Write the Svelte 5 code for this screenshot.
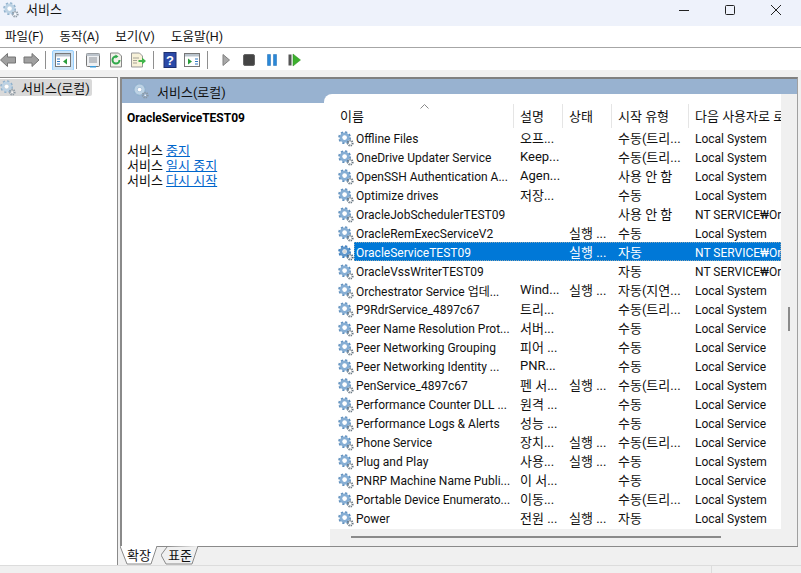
<script>
const S = "Local System";
const L = "Local Service";
const NT = "NT SERVICE₩OracleServiceTEST09";
const RUN = "실행 ...";
const TRIG = "수동(트리...";

const services = [
	["Offline Files", "오프...", "", TRIG, S],
	["OneDrive Updater Service", "Keep...", "", TRIG, S],
	["OpenSSH Authentication A...", "Agen...", "", "사용 안 함", S],
	["Optimize drives", "저장...", "", "수동", S],
	["OracleJobSchedulerTEST09", "", "", "사용 안 함", NT],
	["OracleRemExecServiceV2", "", RUN, "수동", S],
	["OracleServiceTEST09", "", RUN, "자동", NT],
	["OracleVssWriterTEST09", "", "", "자동", NT],
	["Orchestrator Service 업데...", "Wind...", RUN, "자동(지연...", S],
	["P9RdrService_4897c67", "트리...", "", TRIG, S],
	["Peer Name Resolution Prot...", "서버...", "", "수동", L],
	["Peer Networking Grouping", "피어 ...", "", "수동", L],
	["Peer Networking Identity ...", "PNR...", "", "수동", L],
	["PenService_4897c67", "펜 서...", RUN, TRIG, S],
	["Performance Counter DLL ...", "원격 ...", "", "수동", L],
	["Performance Logs & Alerts", "성능 ...", "", "수동", L],
	["Phone Service", "장치...", RUN, TRIG, L],
	["Plug and Play", "사용...", RUN, "수동", S],
	["PNRP Machine Name Publi...", "이 서...", "", "수동", L],
	["Portable Device Enumerato...", "이동...", "", TRIG, S],
	["Power", "전원 ...", RUN, "자동", S],
];

const selected = "OracleServiceTEST09";
const menus = ["파일(F)", "동작(A)", "보기(V)", "도움말(H)"];
const columns = ["이름", "설명", "상태", "시작 유형", "다음 사용자로 로그온"];
</script>

{#snippet gear(pale)}
	<svg class="gear" viewBox="0 0 16 16" width="16" height="16">
		<circle cx="6.6" cy="6.6" r="5" fill="none" stroke={pale ? "#8fb0cc" : "#5f8fbd"} stroke-width="2.8" stroke-dasharray="2 1.9" />
		<circle cx="6.6" cy="6.6" r="3.7" fill="none" stroke={pale ? "#bcd2e4" : "#86aed4"} stroke-width="2.8" />
		<circle cx="6.6" cy="6.6" r="1.9" fill="#fff" />
		<circle cx="12.2" cy="12.2" r="2.4" fill="none" stroke={pale ? "#8a96a0" : "#66747f"} stroke-width="2" stroke-dasharray="1.1 0.8" />
		<circle cx="12.2" cy="12.2" r="0.8" fill="#fff" />
	</svg>
{/snippet}

<div class="window">
	<header class="titlebar">
		{@render gear(true)}
		<span class="title">서비스</span>
		<div class="controls">
			<svg viewBox="0 0 12 12" width="12" height="12"><path d="M1 6.5h10" stroke="#222" fill="none" /></svg>
			<svg viewBox="0 0 12 12" width="12" height="12"><rect x="1.5" y="1.5" width="9" height="9" rx="1" stroke="#222" fill="none" /></svg>
			<svg viewBox="0 0 12 12" width="12" height="12"><path d="M1 1l10 10M11 1L1 11" stroke="#222" fill="none" /></svg>
		</div>
	</header>

	<nav class="menubar">
		{#each menus as m}
			<span>{m}</span>
		{/each}
	</nav>

	<div class="toolbar">
		<svg class="tool" viewBox="0 0 40 16" width="40" height="16">
			<path d="M0.500 8L7.500 1.500V5H15.500V11H7.500V14.500z" fill="#a0a0a0" stroke="#757575" />
			<path d="M39 8L32 1.500V5H24V11H32V14.500z" fill="#a0a0a0" stroke="#757575" />
		</svg>
		<i class="sep first"></i>
		<div class="tool active">
			<svg viewBox="0 0 16 16" width="16" height="16">
				<rect x="0.500" y="1.500" width="15" height="13" fill="#fff" stroke="#777" />
				<path d="M1 2h14v2.500H1z" fill="#b9c3cc" />
				<path d="M2 6.500h3v1H2zM2 9h3v1H2zM2 11.500h3v1H2z" fill="#2f78c4" />
				<path d="M12 6.500v6L8 9.500z" fill="#2a9d3a" />
			</svg>
		</div>
		<i class="sep"></i>
		<div class="tool">
			<svg viewBox="0 0 16 16" width="16" height="16">
				<rect x="1.500" y="1.500" width="13" height="13" rx="1" fill="#eef0f2" stroke="#777" />
				<path d="M1.500 1.500h13v2.500h-13z" fill="#bcc4cc" />
				<path d="M4 6h8M4 8h8M4 10h8" stroke="#8a8f96" />
				<path d="M5 14h6v1.500H5z" fill="#3a9ad9" />
			</svg>
		</div>
		<div class="tool next">
			<svg viewBox="0 0 16 16" width="16" height="16">
				<path d="M2.500 1h8l3 3v11h-11z" fill="#f2f2ea" stroke="#888" />
				<path d="M11.500 8A3.500 3.500 0 1 1 8 4.500" fill="none" stroke="#2fa84a" stroke-width="2" />
				<path d="M7.500 2.500l3 2-3 2z" fill="#2fa84a" />
			</svg>
		</div>
		<div class="tool">
			<svg viewBox="0 0 16 16" width="16" height="16">
				<path d="M1.500 1h8l3 3v11h-11z" fill="#f7f1d8" stroke="#999" />
				<path d="M3.500 6h5M3.500 8.500h4M3.500 11h4" stroke="#555" stroke-dasharray="1 1" />
				<path d="M8.500 8h3.500V5.500l4 3.500-4 3.500V10H8.500z" fill="#3fb54a" />
			</svg>
		</div>
		<i class="sep"></i>
		<div class="tool">
			<svg viewBox="0 0 16 16" width="16" height="16">
				<rect x="2" y="0.500" width="12" height="15" fill="#2b4aa8" stroke="#1d2f70" />
				<text x="8" y="13" text-anchor="middle" class="help">?</text>
			</svg>
		</div>
		<div class="tool">
			<svg viewBox="0 0 16 16" width="16" height="16">
				<rect x="0.500" y="1.500" width="15" height="13" fill="#fff" stroke="#777" />
				<path d="M1 2h14v2.500H1z" fill="#b9c3cc" />
				<path d="M4 6.500v6l4-3z" fill="#2a9d3a" />
				<path d="M11 6.500h3v1h-3zM11 9h3v1h-3zM11 11.500h3v1h-3z" fill="#2f78c4" />
			</svg>
		</div>
		<i class="sep"></i>
		<svg class="tool play" viewBox="0 0 16 16" width="16" height="16"><path d="M5 2.500l6.500 5.500-6.500 5.500z" fill="#a8a8a8" stroke="#808080" /></svg>
		<svg class="tool play" viewBox="0 0 16 16" width="16" height="16"><rect x="2.500" y="2.500" width="11" height="11" rx="1.500" fill="#444" stroke="#666" /></svg>
		<svg class="tool play" viewBox="0 0 16 16" width="16" height="16"><path d="M3.500 2.500h3v11h-3zM9.500 2.500h3v11h-3z" fill="#2a88d8" stroke="#1a68b0" stroke-width="0.500" /></svg>
		<svg class="tool play" viewBox="0 0 16 16" width="16" height="16">
			<rect x="1.500" y="2.500" width="3" height="11" fill="#555" />
			<path d="M6 2l7.500 6-7.500 6z" fill="#3db02e" stroke="#2a8a20" stroke-width="0.500" />
		</svg>
	</div>

	<main class="workspace">
		<aside class="tree">
			<div class="tree-node">
				{@render gear(true)}
				<span>서비스(로컬)</span>
			</div>
		</aside>

		<section class="panel">
			<div class="panel-body">
				<div class="panel-head">
					{@render gear(true)}
					<span>서비스(로컬)</span>
				</div>

				<div class="content">
					<div class="details">
						<h2>OracleServiceTEST09</h2>
						<p>서비스 <a href="#stop">중지</a></p>
						<p>서비스 <a href="#pause">일시 중지</a></p>
						<p>서비스 <a href="#restart">다시 시작</a></p>
					</div>

					<div class="list">
						<div class="list-main">
							<div class="viewport">
								<div class="row head">
									{#each columns as c, i}
										<div class="cell">{c}{#if i === 0}<svg class="sort" viewBox="0 0 9 5" width="9" height="5"><path d="M0.500 4.500l4-4 4 4" fill="none" stroke="#888" /></svg>{/if}</div>
									{/each}
								</div>
								{#each services as s}
									<div class="row" class:selected={s[0] === selected}>
										<div class="cell name">
											{@render gear(false)}
											<span>{s[0]}</span>
										</div>
										<div class="cell">{s[1]}</div>
										<div class="cell">{s[2]}</div>
										<div class="cell">{s[3]}</div>
										<div class="cell latin">{s[4]}</div>
									</div>
								{/each}
							</div>
							<div class="vscroll"><i></i></div>
						</div>
						<div class="hscroll"><i></i></div>
					</div>
				</div>
			</div>
			<div class="tabs">
				<div class="tab on">
					<svg viewBox="0 0 38 19" width="38" height="19"><path d="M0 0l7 18h24l6-18" fill="#fff" stroke="#8a8a8a" /></svg>
					<span>확장</span>
				</div>
				<div class="tab">
					<svg viewBox="0 0 38 19" width="38" height="19"><path d="M6 1L0 9l5 9h26l6-18" fill="#f0f0f0" stroke="#8a8a8a" /></svg>
					<span>표준</span>
				</div>
			</div>
		</section>
	</main>

	<footer class="status"><i></i></footer>
</div>

<style>
	:global(body) { margin: 0; background: #fff; }
	.window {
		width: 801px; height: 573px; display: flex; flex-direction: column; overflow: hidden;
		font-family: Roboto, "Noto Sans CJK KR", sans-serif; font-size: 13px; color: #111;
	}

	.titlebar { height: 26px; box-sizing: border-box; flex: none; background: #eef2fb; display: flex; align-items: flex-start; padding: 2px 0 0 3px; }
	.title { margin: 1px 0 0 7px; line-height: 14px; }
	.controls { margin-left: auto; display: flex; gap: 34px; padding: 2px 19px 0 0; }

	.menubar { height: 22px; box-sizing: border-box; flex: none; display: flex; align-items: center; padding: 0 0 2px 5px; gap: 16px; border-bottom: 1px solid #a6a6a6; font-size: 12.500px; }

	.toolbar { height: 22px; box-sizing: border-box; padding-top: 2px; flex: none; display: flex; align-items: center; }
	.tool { flex: none; }
	.toolbar div.tool { width: 22px; height: 21px; display: flex; align-items: center; justify-content: center; }
	.toolbar div.active { background: #cce4f7; border: 1px solid #99d1ff; box-sizing: border-box; border-radius: 2px; }
	.toolbar div.next { margin-left: 1px; }
	.sep { flex: none; width: 1px; height: 18px; background: #8f8f8f; margin: 0 5px 0 4px; }
	.sep.first { margin: 0 6px 0 5px; }
	.tool.active + .sep { margin-left: 2px; }
	.tool.play { margin-left: 3px; margin-right: 4px; }
	.sep + .tool.play { margin-left: 5px; }

	.workspace { flex: 1; min-height: 0; display: flex; background: #f0f0f0; padding-top: 7px; }
	.tree { width: 117px; flex: none; background: #fff; border-top: 1px solid #8a8a8a; border-right: 1px solid #8a8a8a; padding-top: 1px; }
	.tree-node { width: 92px; height: 17px; background: #d9d9d9; border-radius: 0 2px 2px 0; display: flex; align-items: center; gap: 5px; }

	.panel { flex: 1; min-width: 0; margin-left: 2px; margin-right: 3px; display: flex; flex-direction: column; }
	.panel-body { flex: 1; min-height: 0; border-top: 2px solid #808080; border-left: 2px solid #8a8a8a; border-right: 1px solid #a0a0a0; background: #98b2d0; position: relative; }
	.panel-head { height: 24px; display: flex; align-items: center; gap: 8px; padding-left: 11px; position: absolute; top: 0; left: 0; }
	.content { position: absolute; inset: 15px 0 0 0; display: flex; align-items: stretch; }
	.details { width: 202px; flex: none; background: #fff; margin-top: 9px; padding: 7px 5px 5px; box-sizing: border-box; line-height: 15px; }
	h2 { margin: 0 0 17px; font-size: 12px; font-weight: 700; line-height: 16px; color: #000; }
	p { margin: 0; }
	a { color: #0066cc; }

	.list { flex: 1; min-width: 0; background: #fff; border-top-left-radius: 8px; display: flex; flex-direction: column; }
	.list-main { flex: 1; min-height: 0; display: flex; }
	.viewport { width: 445px; margin-left: 12px; flex: none; overflow: hidden; }
	.vscroll { flex: 1; background: #f0f0f0; position: relative; }
	.vscroll i { position: absolute; left: 7px; top: 213px; width: 2px; height: 24px; background: #8a8a8a; }
	.hscroll { height: 17px; flex: none; background: #f0f0f0; margin-left: 6px; position: relative; }
	.hscroll i { position: absolute; left: 21px; top: 7px; width: 370px; height: 2px; background: #8a8a8a; }

	.row { display: grid; grid-template-columns: 178px 49px 49px 77px 200px; height: 19px; align-items: center; white-space: nowrap; position: relative; }
	.row.head { height: 24px; margin-top: 10px; align-items: stretch; }
	.row.head .cell { border-right: 1px solid #e5e5e5; display: flex; align-items: center; padding-bottom: 2px; }
	.row.head .cell:first-child { padding-left: 4px; }
	.cell { padding-left: 6px; box-sizing: border-box; overflow: hidden; }
	.cell.latin { font-size: 12px; padding-top: 2px; }
	.cell.name { display: flex; align-items: center; padding: 2px 0 0 2px; gap: 2px; overflow: visible; font-size: 12px; }
	.sort { position: absolute; left: 84px; top: 0; }
	.gear { flex: none; }
	.row.selected { background: linear-gradient(to right, transparent 18px, #0078d7 18px); color: #fff; }
	.row.selected .gear { filter: saturate(1.6) brightness(0.85); }
	.row.selected::after { content: ""; position: absolute; left: 18px; top: 0; right: 0; bottom: 0; border: 1px dotted rgba(255, 205, 150, 0.55); box-sizing: border-box; pointer-events: none; }

	.tabs { height: 18px; flex: none; display: flex; border-top: 1px solid #8a8a8a; gap: 3px; background: #f0f0f0; }
	.tab { position: relative; width: 38px; height: 18px; text-align: center; line-height: 17px; }
	.tab svg { position: absolute; left: 0; top: -1px; }
	.tab span { position: relative; }

	.status { height: 7px; flex: none; background: #f0f0f0; border-top: 1px solid #dcdcdc; position: relative; }
	.status i { position: absolute; left: 711px; top: 0; bottom: 0; width: 1px; background: #dcdcdc; }

	.help { font: 700 13px "Liberation Sans", sans-serif; fill: #fff; }
</style>
